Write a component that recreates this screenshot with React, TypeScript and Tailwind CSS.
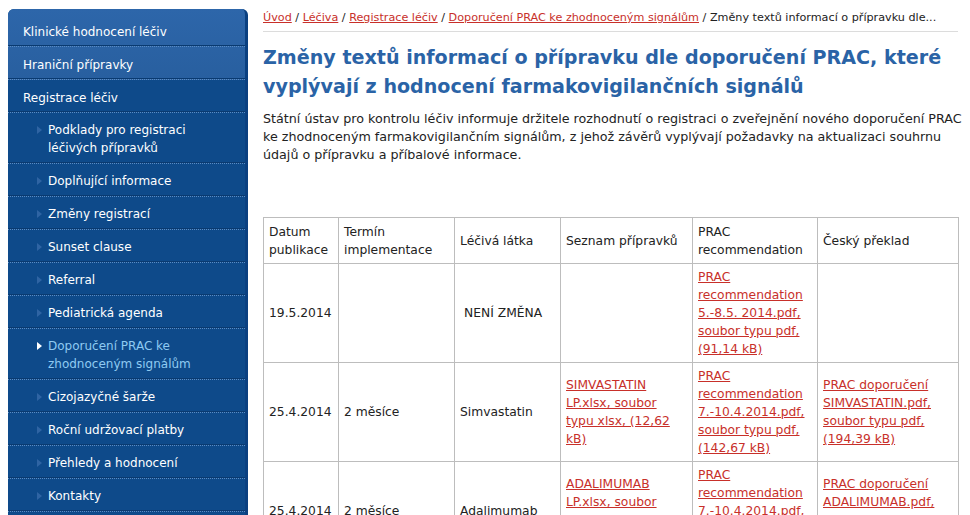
import React from "react";

const F = { fontFamily: '"DejaVu Sans", Verdana, sans-serif' };

function Arrow({ active }: { active?: boolean }) {
  return (
    <svg width="5" height="8" viewBox="0 0 5 8" className="shrink-0 mt-[5px]">
      <path d="M0 0 L5 4 L0 8 Z" fill={active ? "#ffffff" : "#2f64a3"} />
    </svg>
  );
}

const top = ["Klinické hodnocení léčiv", "Hraniční přípravky"];
const subs: { t: React.ReactNode; active?: boolean; two?: boolean }[] = [
  { t: <>Podklady pro registraci<br />léčivých přípravků</>, two: true },
  { t: "Doplňující informace" },
  { t: "Změny registrací" },
  { t: "Sunset clause" },
  { t: "Referral" },
  { t: "Pediatrická agenda" },
  { t: <>Doporučení PRAC ke<br />zhodnoceným signálům</>, two: true, active: true },
  { t: "Cizojazyčné šarže" },
  { t: "Roční udržovací platby" },
  { t: "Přehledy a hodnocení" },
  { t: "Kontakty" },
];

const sep = "border-b border-dotted border-[#5b8bc2] shadow-[0_-1px_0_#0a3a70_inset]";

function Sidebar() {
  return (
    <div className="w-[240px] shrink-0 ml-[8px] mt-[9px] rounded-t-[6px] overflow-hidden bg-[#0e4a8a] border-r-[3px] border-[#0b4080] text-[12px] leading-[18px]" style={F}>
      <div className="bg-gradient-to-b from-[#2d66aa] to-[#285f9f] pt-[5px]">
        {top.map((t) => (
          <div key={t} className={`h-[33px] pt-[9px] pl-[15px] text-white ${sep}`}>{t}</div>
        ))}
      </div>
      <div className={`h-[33px] pt-[9px] pl-[15px] text-white ${sep}`}>Registrace léčiv</div>
      {subs.map((s, i) => (
        <div key={i} className={`${s.two ? "h-[51px] pt-[8px]" : "h-[33px] pt-[8px]"} flex pl-[29px] gap-[6px] ${sep}`}>
          <Arrow active={s.active} />
          <div className={s.active ? "text-[#8fcaf2]" : "text-white"}>{s.t}</div>
        </div>
      ))}
    </div>
  );
}

const L = ({ children }: { children: React.ReactNode }) => (
  <a href="#" className="text-[#c8302a] underline">{children}</a>
);

const td = "border border-[#bdbdbd] px-[5px] py-[4px] align-middle";

export default function App() {
  return (
    <div className="w-[970px] h-[515px] overflow-hidden bg-white flex text-[#222]" style={F}>
      <Sidebar />
      <div className="ml-[15px] w-[695px] shrink-0">
        <div className="pt-[11px] pb-[6px] text-[11.2px] leading-[14px] whitespace-nowrap border-b border-[#dcdcdc] text-[#222]">
          <L>Úvod</L> / <L>Léčiva</L> / <L>Registrace léčiv</L> / <L>Doporučení PRAC ke zhodnoceným signálům</L> / Změny textů informací o přípravku dle...
        </div>
        <h1 className="mt-[11px] text-[19.1px] leading-[29px] font-bold text-[#2a63a6] whitespace-nowrap">
          Změny textů informací o přípravku dle doporučení PRAC, které<br />vyplývají z hodnocení farmakovigilančních signálů
        </h1>
        <p className="mt-[9px] text-[12.7px] leading-[18px] whitespace-nowrap">
          Státní ústav pro kontrolu léčiv informuje držitele rozhodnutí o registraci o zveřejnění nového doporučení PRAC<br />
          ke zhodnoceným farmakovigilančním signálům, z jehož závěrů vyplývají požadavky na aktualizaci souhrnu<br />
          údajů o přípravku a příbalové informace.
        </p>
        <table className="mt-[53px] w-[695px] table-fixed border-collapse text-[12.3px] leading-[18px]">
          <colgroup>
            <col className="w-[75px]" />
            <col className="w-[116px]" />
            <col className="w-[106px]" />
            <col className="w-[132px]" />
            <col className="w-[125px]" />
            <col className="w-[141px]" />
          </colgroup>
          <tbody>
            <tr className="h-[46px]">
              <td className={td}>Datum<br />publikace</td>
              <td className={td}>Termín<br />implementace</td>
              <td className={td}>Léčivá látka</td>
              <td className={td}>Seznam přípravků</td>
              <td className={td}>PRAC<br />recommendation</td>
              <td className={td}>Český překlad</td>
            </tr>
            <tr className="h-[99px]">
              <td className={td}>19.5.2014</td>
              <td className={td}></td>
              <td className={`${td} pl-[9px]`}>NENÍ ZMĚNA</td>
              <td className={td}></td>
              <td className={td}><L>PRAC<br />recommendation<br />5.-8.5. 2014.pdf,<br />soubor typu pdf,<br />(91,14 kB)</L></td>
              <td className={td}></td>
            </tr>
            <tr className="h-[99px]">
              <td className={td}>25.4.2014</td>
              <td className={td}>2 měsíce</td>
              <td className={td}>Simvastatin</td>
              <td className={td}><L>SIMVASTATIN<br />LP.xlsx, soubor<br />typu xlsx, (12,62<br />kB)</L></td>
              <td className={td}><L>PRAC<br />recommendation<br />7.-10.4.2014.pdf,<br />soubor typu pdf,<br />(142,67 kB)</L></td>
              <td className={td}><L>PRAC doporučení<br />SIMVASTATIN.pdf,<br />soubor typu pdf,<br />(194,39 kB)</L></td>
            </tr>
            <tr className="h-[99px]">
              <td className={td}>25.4.2014</td>
              <td className={td}>2 měsíce</td>
              <td className={td}>Adalimumab</td>
              <td className={td}><L>ADALIMUMAB<br />LP.xlsx, soubor<br />typu xlsx, (12,49<br />kB)</L></td>
              <td className={td}><L>PRAC<br />recommendation<br />7.-10.4.2014.pdf,<br />soubor typu pdf,<br />(142,67 kB)</L></td>
              <td className={td}><L>PRAC doporučení<br />ADALIMUMAB.pdf,<br />soubor typu pdf,<br />(190,12 kB)</L></td>
            </tr>
          </tbody>
        </table>
      </div>
    </div>
  );
}
